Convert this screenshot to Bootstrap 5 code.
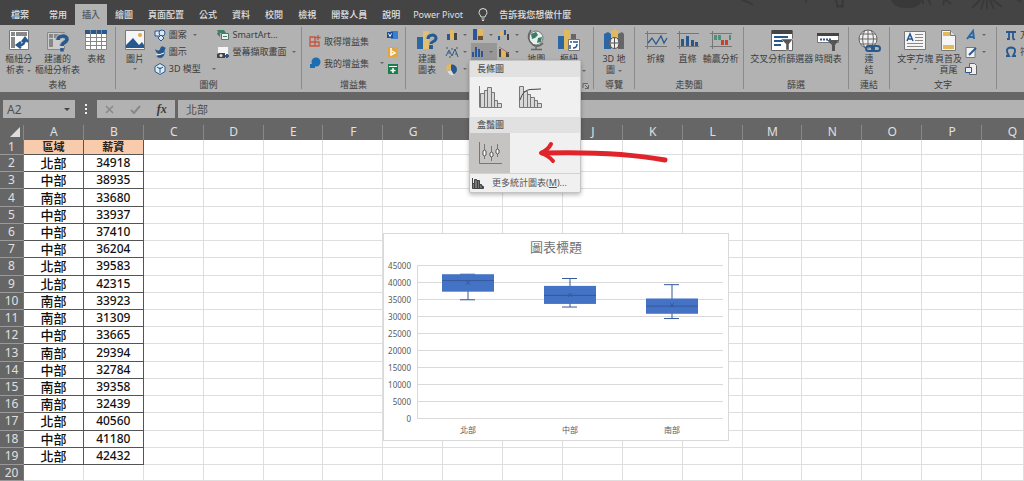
<!DOCTYPE html>
<html lang="zh-Hant">
<head>
<meta charset="utf-8">
<meta name="viewport" content="width=device-width, initial-scale=1">
<title>A2 - 北部</title>
<link href="https://cdn.jsdelivr.net/npm/bootstrap@5.3.0/dist/css/bootstrap.min.css" rel="stylesheet">
<script src="https://cdn.jsdelivr.net/npm/bootstrap@5.3.0/dist/js/bootstrap.bundle.min.js"></script>
<style>
  :root { --ink:#3c3c3c; --dark:#444; --mid:#666; --panel:#b2b2b2; }
  body { font-family:"Noto Sans","Noto Sans CJK TC",sans-serif; font-size:9px; line-height:11px; color:var(--ink); background:#fff; }
  button { font:inherit; color:inherit; background:none; border:0; padding:0; white-space:nowrap; }
  svg { display:block; flex:none; overflow:visible; }
  .tabs { background:var(--dark); height:25px; padding-left:4px; flex-wrap:nowrap; overflow:hidden; }
  .tab-row { height:25px; }
  .tabs .nav-link { color:#e0e0e0; padding:0 7px; line-height:16px; margin-right:1px; height:16px; white-space:nowrap; font-weight:500; }
  .tabs .nav-link.active { background:var(--panel); color:#505050; }
  .tabs .first { margin-right:6px; }
  .tabs .power { margin-left:-2px; margin-right:8px; font-weight:400; }
  .ribbon { background:var(--panel); display:grid; grid-template-columns:116fr 186fr 104fr 188fr 41fr 109fr 105fr 41fr 107fr 27fr; }
  .group { min-width:0; border-right:1px solid transparent; border-image:linear-gradient(transparent 3px,#8a8a8a 3px,#8a8a8a 63px,transparent 63px) 1; }
  .group:last-child { border:0; overflow:hidden; }
  .tools { display:grid; height:54px; }
  .tools > * { min-width:0; }
  .caption { height:13px; line-height:12px; text-align:center; position:relative; }
  .big { display:flex; flex-direction:column; align-items:center; padding-top:4px; justify-content:flex-start; }
  .big svg { width:22px; height:22px; margin-bottom:2px; }
  .stack { padding-top:1px; }
  .stack button { display:flex; align-items:center; height:17px; gap:3px; }
  .stack svg { width:12px; height:12px; }
  .stack.wide button { height:22px; }
  .stack.wide { padding-top:5px; }
  .stack.mini button { gap:5px; padding-left:1px; width:100%; }
  .stack.mini .on { background:#979797; }
  .dn { display:inline-block; border:2px solid transparent; border-top-color:#666; border-bottom:0; vertical-align:middle; margin-left:3px; }
  .mini .dn { margin-left:0; }
  .c-table { grid-template-columns:38fr 40fr 38fr; }
  .c-pic { grid-template-columns:38fr 64fr 84fr; }
  .c-add { grid-template-columns:79fr 18fr; padding-left:7px; }
  .c-chart { grid-template-columns:36fr 26fr 26fr 25fr 30fr 36fr 6fr; padding-left:3px; }
  .c-spark { grid-template-columns:42fr 22fr 45fr; }
  .c-filter { grid-template-columns:76fr 18fr 11fr; }
  .c-text { grid-template-columns:51fr 16fr 40fr; }
  .bar { background:var(--mid); padding:8px 0 0 3px; gap:3px; }
  .bar input { height:18px; border:0; background:var(--panel); color:#505050; min-width:0; padding:0 8px; border-radius:0; }
  .namebox { width:72px; position:relative; }
  .namebox input { font-size:12px; padding:0 4px; }
  .namebox .dn { position:absolute; right:5px; top:8px; border-width:3px 3px 0; border-top-color:#444; margin:0; }
  .entry input { font-size:11px; }
  .marks { width:78px; height:18px; background:var(--panel); }
  .marks .fx { font:italic 700 12px "Liberation Serif",serif; }
  .dots { width:16px; color:#eee; }
  .sheet { position:relative; overflow:hidden; }
  .cells { width:100%; height:100%; table-layout:fixed; border-collapse:separate; border-spacing:0; font-size:12px; line-height:14px; text-align:center; }
  .cells td, .cells th { padding:0; border-right:1px solid #dedede; border-bottom:1px solid #dedede; font-weight:400; }
  .cells .corner-col { width:24px; }
  .cells .last-col { width:42px; }
  .cells .first-row { height:15px; }
  .cells .last-row { height:16px; }
  .cells thead th { background:linear-gradient(#888,#888) right bottom/1px 15px no-repeat var(--mid); border:0; color:#e0e0e0; height:22px; padding-top:6px; }
  .cells thead th:last-child { background:var(--mid); text-align:right; padding-right:7px; }
  .cells tbody th { background:var(--mid); color:#e0e0e0; border-color:#999; border-right-color:#777; }
  .cells .data { color:#111; border-color:#555; font-weight:500; }
  .cells td.zone { font-size:13px; }
  .cells td.head { font-size:11px; font-weight:700; background:#f8cbad; color:#222; }
  .chart { position:absolute; left:383px; top:115px; background:#fff; border:1px solid #d9d9d9; }
  .chart text { fill:#595959; font-size:8px; }
  .chart .title { font-size:13px; fill:#737373; }
  .gallery.dropdown-menu { display:block; position:absolute; left:469px; top:60px; min-width:0; width:112px; padding:0; margin:0; border:1px solid #c4c4c4; border-radius:2px; background:#f0f0f0; box-shadow:0 2px 4px #0004; font-size:9px; color:#555; z-index:5; }
  .gallery .dropdown-header { font-size:9px; line-height:16px; padding:0 0 0 7px; background:#e1e1e1; color:#555; }
  .gallery .choice { width:40px; height:40px; display:flex; align-items:center; justify-content:center; }
  .gallery .choice.active { background:#c6c4c3; }
  .gallery .dropdown-item { font-size:9px; line-height:18px; padding:0 0 0 2px; color:#555; gap:8px; border-top:1px solid #d2d2d2; }
  .stroke { position:absolute; left:536px; top:140px; z-index:6; pointer-events:none; }
</style>
</head>
<body class="vh-100 d-flex flex-column overflow-hidden position-relative">

<header>
  <nav class="nav tabs align-items-end" aria-label="功能區索引標籤">
    <div class="tab-row d-flex align-items-center pt-1 flex-nowrap w-100">
      <a class="nav-link first" href="#">檔案</a>
      <a class="nav-link" href="#">常用</a>
      <a class="nav-link active h-100 d-flex align-items-center" href="#">插入</a>
      <a class="nav-link" href="#">繪圖</a>
      <a class="nav-link" href="#">頁面配置</a>
      <a class="nav-link" href="#">公式</a>
      <a class="nav-link" href="#">資料</a>
      <a class="nav-link" href="#">校閱</a>
      <a class="nav-link" href="#">檢視</a>
      <a class="nav-link" href="#">開發人員</a>
      <a class="nav-link" href="#">說明</a>
      <a class="nav-link power" href="#">Power Pivot</a>
      <svg width="10" height="13" viewBox="0 0 10 13" fill="none" stroke="#ddd"><path d="M3 9C3 7.500 1 6.500 1 4.500a4 4 0 0 1 8 0C9 6.500 7 7.500 7 9zM3.500 11h3M4 12.500h2"/></svg>
      <a class="nav-link ms-1" href="#">告訴我您想做什麼</a>
      <svg class="ms-auto align-self-start" width="284" height="20" viewBox="0 4 284 20" fill="none" stroke="#393939" stroke-width="2"><path d="M2 0l6 2 5 3M66 0v3M96 0l2 8m5-8l-1 8m-6-2h8"/><path d="M152 0q3 8 17 7 10 0 12-7z" fill="#393939"/><path d="M155 0l4-4m-3 6l5-5m0 6l3-4m4 4v-5m7 4l-3-4m15-1l4 8m-8-8v7m20-6l8 6m-6-7l-2 8m5-6h7M240 0l-8 8m12-8l-3 9m6-9v9m3-9l4 9m-1-9l9 7m15-8l4 3"/></svg>
    </div>
  </nav>

  <div class="ribbon">
    <section class="group">
      <div class="tools c-table">
        <button class="big"><svg viewBox="0 0 22 22"><path fill="#fff" stroke="#777" d="M1.500 1.500h19v19h-19z"/><path fill="#888" d="M3 3h4v4H3zm5 0h11v4H8zM3 8h4v11H3z"/><path fill="none" stroke="#28598e" stroke-width="2.500" d="M10 16c5 1 7-2 7-6m-3 3l3-4 3 4m-7 0l-4 3 4 3"/></svg>樞紐分<span>析表<i class="dn"></i></span></button>
        <button class="big"><svg viewBox="0 0 22 22"><path fill="#ccc" stroke="#888" d="M1.500 3.500h17v17h-17z"/><path fill="#888" d="M3 5h4v4H3zm5 0h9v4H8zM3 10h4v8H3z"/><path fill="none" stroke="#b2b2b2" stroke-width="6" d="M12 11c0-5 9-5 9-1 0 4-5 3-5 7"/><path fill="none" stroke="#28598e" stroke-width="3.500" d="M12 11c0-5 9-5 9-1 0 4-5 3-5 7m0 2v3.500"/></svg>建議的<span>樞紐分析表</span></button>
        <button class="big"><svg viewBox="0 0 22 22"><path fill="#fff" stroke="#888" d="M.5 1.500h21v19H.5z"/><path fill="#28598e" d="M0 1h22v4H0z"/><path stroke="#888" d="M1 8.500h20M1 12.500h20M1 16.500h20M5.500 1v19M11.500 1v19M16.500 1v19"/></svg>表格</button>
      </div>
      <div class="caption">表格</div>
    </section>

    <section class="group">
      <div class="tools c-pic">
        <button class="big"><svg viewBox="0 0 22 22"><path fill="#f5f5f5" stroke="#777" d="M1.500 1.500h19v19h-19z"/><path fill="#28598e" d="M2 19v-3l7-7 6 7 3-3 2 3v3z"/><circle cx="16" cy="6" r="2" fill="#e6a84c"/></svg>圖片<i class="dn mt-1 ms-0"></i></button>
        <div class="stack">
          <button><svg viewBox="0 0 12 12" fill="#dce8f0" stroke="#28598e"><path d="M1 2h6v5H1z"/><circle cx="8" cy="4" r="3"/><path d="M7 6l3 3-3 3-3-3z"/></svg>圖案<i class="dn"></i></button>
          <button><svg viewBox="0 0 12 12"><path fill="#28598e" d="M1 3q4 3 5 0 1-4 4-2l2 1-1 1q0 5-5 5-4 0-5-5z"/><path fill="#28598e" d="M2 9q5 0 9-3-1 6-5 6-3 0-4-3z"/><path stroke="#fff" fill="none" d="M2 9q4 0 8-2"/></svg>圖示</button>
          <button><svg viewBox="0 0 12 12" fill="#dcecf0" stroke="#28598e"><path d="M6 .5l5 3v5l-5 3-5-3v-5zM3 4l3 2 3-2M6 6v4"/></svg>3D 模型<i class="dn ms-2"></i></button>
        </div>
        <div class="stack">
          <button><svg viewBox="0 0 12 12"><path fill="#3f7f62" d="M0 1h7l2 3H3v4L0 5l1-2z"/><path fill="#eee" stroke="#4d7766" d="M4.500 4.500h7v6h-7z"/><path stroke="#4d7766" d="M6 7.500h4"/></svg>SmartArt...</button>
          <button><svg viewBox="0 0 12 12"><path fill="#f5f5f5" d="M1 1h10v8H1z"/><path fill="#444" d="M2 7h6v5H0V8z"/><circle cx="4" cy="9.500" r="1.500" fill="#ddd"/><path stroke="#28598e" stroke-width="2" d="M8 10h4m-2-2v4"/></svg>螢幕擷取畫面<i class="dn"></i></button>
        </div>
      </div>
      <div class="caption">圖例</div>
    </section>

    <section class="group">
      <div class="tools c-add">
        <div class="stack wide">
          <button><svg viewBox="0 0 12 12" fill="none" stroke="#c8553d" stroke-width="1.300"><path d="M1 2h5v9H1zm0 5h9v4H6V2M9 0v5M6.500 2.500h5"/></svg>取得增益集</button>
          <button><svg viewBox="0 0 12 12"><circle cx="7" cy="5" r="4.500" fill="#1d6db5"/><path fill="#1d6db5" d="M1 7h5v4H1z"/></svg>我的增益集<i class="dn ms-2"></i></button>
        </div>
        <div class="stack">
          <button aria-label="Visio"><svg viewBox="0 0 12 12"><path fill="#3a80ce" d="M4 2h7v8H4z"/><path fill="#1b4f99" d="M0 3h6v6H0z"/><path stroke="#fff" fill="none" d="M1.500 4.500l1.500 3 1.500-3"/></svg></button>
          <button aria-label="Bing"><svg viewBox="0 0 12 12"><path fill="#e3a53c" d="M1 1h10v10H1z"/><path fill="none" stroke="#fff" stroke-width="1.500" d="M4 2v7l4-2-3-2"/></svg></button>
          <button aria-label="People Graph"><svg viewBox="0 0 12 12"><path fill="#16804a" d="M1 1h10v10H1z"/><path stroke="#fff" d="M2 3.500h8"/><path stroke="#fff" stroke-width="1.500" d="M3.500 7.500h5M6 5v5"/></svg></button>
        </div>
      </div>
      <div class="caption">增益集</div>
    </section>

    <section class="group">
      <div class="tools c-chart">
        <button class="big"><svg viewBox="0 0 22 22"><path fill="#2b66a5" d="M1 8h6v12H1z"/><path fill="#e3c06f" d="M7 2h6v18H7z"/><path fill="#2b66a5" d="M13 13h4v7h-4z"/><path fill="none" stroke="#b2b2b2" stroke-width="5" d="M12 10c0-5 8-5 8-1 0 4-5 3-5 7"/><path fill="none" stroke="#28598e" stroke-width="3" d="M12 10c0-5 8-5 8-1 0 4-5 3-5 6m0 2v3"/></svg>建議<span>圖表</span></button>
        <div class="stack mini">
          <button aria-label="直條圖"><svg viewBox="0 0 12 12"><path fill="#2b579a" d="M1 5h3v6H1z"/><path fill="#e3b95f" d="M4 1h4v10H4z"/><path fill="#444" d="M8 4h3v7H8z"/></svg><i class="dn"></i></button>
          <button aria-label="散佈圖"><svg viewBox="0 0 12 12" fill="none" stroke="#555"><path d="M0 10l3-6 3 6 3-7 3 8" stroke="#28598e"/><path d="M0 2h2m0 5h2m1-4h2m2 5h2m-1-6h2m-9 9h2"/></svg><i class="dn"></i></button>
          <button aria-label="圓形圖"><svg viewBox="0 0 12 12"><circle cx="6" cy="6.500" r="5" fill="#28598e"/><path fill="#e3b95f" d="M5 7V1Q0 1 0 6l1 2z"/><path fill="#ddd" d="M5 7l3 5Q3 13 1 8z"/></svg><i class="dn"></i></button>
        </div>
        <div class="stack mini">
          <button aria-label="階層圖"><svg viewBox="0 0 12 12"><path fill="#2b579a" d="M1 0h4v11H1z"/><path fill="#e3b95f" d="M6 0h5v6H6z"/><path fill="#71502d" d="M6 7h5v4H6z"/></svg><i class="dn"></i></button>
          <button class="on" aria-label="統計圖表"><svg viewBox="0 0 12 12"><path fill="#2b579a" d="M0 6h2v5H0zm3-5h2v10H3zm3 2h2v8H6zm3 2h2v6H9z"/></svg><i class="dn"></i></button>
        </div>
        <div class="stack mini">
          <button aria-label="瀑布圖"><svg viewBox="0 0 12 12"><path fill="#2b579a" d="M0 7h2v4H0zm6-6h2v5H6z"/><path fill="#e3b95f" d="M2 2h3v5H2z"/><path fill="#444" d="M9 5h2v6H9z"/></svg><i class="dn"></i></button>
          <button aria-label="組合圖"><svg viewBox="0 0 12 12"><path fill="#444" d="M1 3h2v8H1z"/><path fill="#e3b95f" d="M4 5h3v6H4z"/><path fill="#444" d="M8 6h3v5H8z"/><path fill="none" stroke="#c06a4b" d="M1 1l5 3 5 4"/></svg><i class="dn"></i></button>
        </div>
        <button class="big"><svg viewBox="0 0 22 22"><circle cx="11" cy="9" r="7" fill="#e6efec" stroke="#6b7773"/><path fill="#3e7b67" d="M6 5l5-2 2 3-3 3-3 1zm7 4l4-1-1 5-4 1z"/><path fill="none" stroke="#666" stroke-width="1.500" d="M6 1q-6 8 2 15 6 3 10-2M11 17v3M6 20.500h11"/></svg>地圖</button>
        <button class="big"><svg viewBox="0 0 22 22"><path fill="#2b66a5" d="M0 7h6v13H0z"/><path fill="#e3b95f" d="M6 1h6v19H6z"/><path fill="#666" d="M13 5h5v6h-5z"/><path fill="#fff" stroke="#777" d="M10.500 10.500h11v11h-11z"/><path fill="none" stroke="#28598e" stroke-width="1.500" d="M12 13h2m1 0h5m-8 3v4m3-1q4 0 4-4"/></svg>樞紐<span>分析圖<i class="dn"></i></span></button>
      </div>
      <div class="caption"><svg class="position-absolute end-0 top-0 mt-1 me-1" width="6" height="6" fill="none" stroke="#666"><path d="M0 5V.5h5M2 2l3 3M5.500 2v3.500H2"/></svg></div>
    </section>

    <section class="group">
      <div class="tools">
        <button class="big"><svg viewBox="0 0 22 22"><path fill="#2b66a5" d="M1 5l4-2 3 2v15H1z"/><path fill="#e3b95f" d="M8 2l4-2 3 2v12H8z"/><path fill="#666" d="M15 5l4-2 2 2v15h-6z"/><g fill="#eee" stroke="#555"><circle cx="11.500" cy="14" r="5.500"/><path fill="none" d="M6 14h11M11.500 8.500v11M8 9.500q-2 5 0 9m7-9q2 5 0 9"/></g></svg>3D 地<span>圖<i class="dn"></i></span></button>
      </div>
      <div class="caption">導覽</div>
    </section>

    <section class="group">
      <div class="tools c-spark">
        <button class="big"><svg viewBox="0 0 22 22" fill="none" stroke="#777"><path d="M2.500 2v18M0 4.500h22M0 17.500h22"/><path stroke="#28598e" stroke-width="1.300" d="M3 14l4-5 4 6 5-8 3 7 3-5"/></svg>折線</button>
        <button class="big"><svg viewBox="0 0 22 22"><path fill="none" stroke="#777" d="M2.500 2v18M0 4.500h22M0 17.500h22"/><path fill="#28598e" d="M4 10h3v7H4zm5-3h3v10H9zm5 4h3v6h-3zm4 2h3v4h-3z"/></svg>直條</button>
        <button class="big"><svg viewBox="0 0 22 22"><path fill="none" stroke="#777" d="M2.500 2v18M0 4.500h22M0 17.500h22"/><path fill="#4e9177" d="M4 6h3v5H4zm4 0h3v5H8zm11 0h2v5h-2z"/><path fill="#c8432f" d="M11 11h3v5h-3zm4 0h3v5h-3z"/></svg>輸贏分析</button>
      </div>
      <div class="caption">走勢圖</div>
    </section>

    <section class="group">
      <div class="tools c-filter">
        <button class="big"><svg viewBox="0 0 22 22"><path fill="#fff" stroke="#666" d="M.5 1.500h21v20H.5z"/><path fill="#444" d="M1 1h20v4H1z"/><path stroke="#28598e" stroke-width="2" d="M3 8h14M3 12h9M3 16h7"/><path fill="#555" stroke="#eee" stroke-width=".5" d="M10 10h12l-4 5v6h-3v-6z"/></svg>交叉分析篩選器</button>
        <button class="big"><svg viewBox="0 0 22 22"><path fill="#fff" stroke="#777" d="M.5 4.500h21v9H.5z"/><path fill="#444" d="M0 4h22v3H0z"/><path stroke="#28598e" stroke-width="2" stroke-dasharray="2 1" d="M3 10.500h11"/><path fill="#555" d="M10 11h12l-4 5v6h-3v-6z"/></svg>時間表</button>
      </div>
      <div class="caption">篩選</div>
    </section>

    <section class="group">
      <div class="tools">
        <button class="big"><svg viewBox="0 0 22 22" fill="none"><g stroke="#666"><circle cx="10" cy="10" r="9" fill="#f0f0f0"/><path d="M1 10h18M10 1v18M3 5h14M3 15h14M7 1q-5 9 0 18m6-18q5 9 0 18"/></g><g stroke="#28598e" stroke-width="2"><rect x="8" y="17" width="8" height="5" rx="2.500"/><rect x="14" y="17" width="8" height="5" rx="2.500"/></g></svg>連<span>結</span></button>
      </div>
      <div class="caption">連結</div>
    </section>

    <section class="group">
      <div class="tools c-text">
        <button class="big"><svg viewBox="0 0 22 22"><path fill="#f5f5f5" stroke="#777" d="M.5 2.500h21v18H.5z"/><path fill="none" stroke="#28598e" stroke-width="1.500" d="M3 12l3-7 3 7M4 10h4"/><path stroke="#888" d="M11 5.500h8M11 8.500h8M11 11.500h8M3 14.500h16M3 17.500h16"/></svg>文字方塊<i class="dn mt-1 ms-0"></i></button>
        <button class="big"><svg viewBox="0 0 22 22"><path fill="#f5f5f5" stroke="#777" d="M4.500 1.500h9l5 5v15h-14z"/><path fill="#e3b95f" d="M6 3h7v4H6zm0 13h11v4H6z"/><path fill="#ddd" stroke="#777" d="M13.500 1.500v5h5"/></svg>頁首及<span>頁尾</span></button>
        <div class="stack mini ps-2">
          <button aria-label="文字藝術師"><svg viewBox="0 0 12 12" fill="none" stroke="#2b66a5" stroke-width="2"><path d="M2 10l6-8 1 8M4 8h5"/></svg><i class="dn"></i></button>
          <button aria-label="簽名欄"><svg viewBox="0 0 12 12"><path fill="#f2f2f2" stroke="#777" d="M1 1.500h9v10H1z"/><path stroke="#28598e" stroke-width="2" d="M4 9l7-7"/></svg><i class="dn"></i></button>
          <button aria-label="物件"><svg viewBox="0 0 12 12" fill="#eee" stroke="#666"><path d="M4.500.5h5l2 2v9h-7z"/><path stroke="#28598e" d="M.5 4.500h6v5h-6z"/></svg></button>
        </div>
      </div>
      <div class="caption">文字</div>
    </section>

    <section class="group">
      <div class="tools">
        <div class="stack ps-2">
          <button><svg viewBox="0 0 12 12" fill="none" stroke="#28598e" stroke-width="1.800"><path d="M1 3h10M4 3v7H2m6-7v6q0 2 2 1"/></svg>方程式</button>
          <button><svg viewBox="0 0 12 12" fill="none" stroke="#28598e" stroke-width="1.800"><path d="M1 10h3Q-1 2 6 1.500 13 2 8 10h3"/></svg>符號</button>
        </div>
      </div>
    </section>
  </div>

  <div class="bar d-flex">
    <div class="namebox"><input class="w-100 d-block" type="text" value="A2" aria-label="名稱方塊"><i class="dn"></i></div>
    <div class="dots d-flex justify-content-center align-items-center"><svg width="2" height="10" fill="currentColor"><path d="M0 0h2v2H0zm0 4h2v2H0zm0 4h2v2H0z"/></svg></div>
    <div class="marks d-flex align-items-center justify-content-around">
      <button aria-label="取消"><svg width="9" height="9" stroke="#888" stroke-width="1.500"><path d="M1 1l7 7M8 1L1 8"/></svg></button>
      <button aria-label="輸入"><svg width="10" height="9" fill="none" stroke="#888" stroke-width="2"><path d="M1 5l3 3 6-7"/></svg></button>
      <button class="fx">fx</button>
    </div>
    <div class="entry flex-grow-1"><input class="w-100 d-block" type="text" value="北部" aria-label="資料編輯列"></div>
  </div>
</header>

<div class="gallery dropdown-menu show">
  <h6 class="dropdown-header">長條圖</h6>
  <div class="d-flex">
    <button class="choice" aria-label="長條圖"><svg width="24" height="24" fill="#d8d8d8" stroke="#777"><path fill="none" d="M1.500 1v21.500"/><path d="M2.500 8.500h4v14h-4zm4-3h3v17h-3zm3-3h4v20h-4zm4 5h3v15h-3zm3 8h3v7h-3zm3 3h4v4h-4z"/></svg></button>
    <button class="choice" aria-label="柏拉圖"><svg width="24" height="24" fill="#d8d8d8" stroke="#777"><path d="M1.500 1.500h4v21h-4zm4 5h4v16h-4zm4 3h3v13h-3zm3 3h4v10h-4zm4 3h3v7h-3zm3 3h4v4h-4z"/><path fill="none" stroke="#444" d="M2 15Q5 5 12 4.500L23 4"/></svg></button>
  </div>
  <h6 class="dropdown-header">盒鬚圖</h6>
  <div class="d-flex">
    <button class="choice active" aria-label="盒鬚圖"><svg width="24" height="24" fill="#fff" stroke="#777"><path fill="none" d="M1.500 1v21.500H24M6.500 3v15M13.500 5v15M19.500 3v13"/><path stroke="#555" d="M6.500 9l1.500 1v4l-1.500 1L5 14v-4zM13.500 11l1.500 1v3l-1.500 1-1.500-1v-3zM19.500 8l1.500 1v3l-1.500 1-1.500-1V9z"/></svg></button>
  </div>
  <a class="dropdown-item d-flex align-items-center" href="#"><svg width="12" height="11" fill="#777" stroke="#444"><path d="M.5 0v10.500h11v-2h-2v-2h-2v-4h-3v-1h-2v4h-2m2 0v5m3-8v8m2-6v6m3-3v3"/></svg><span>更多統計圖表(<u>M</u>)...</span></a>
</div>

<svg class="stroke" width="134" height="26" fill="none" stroke="#e0242b" stroke-width="5" stroke-linecap="round" stroke-linejoin="round" aria-hidden="true"><path d="M129 20Q80 11 6 13"/><path stroke-width="4" d="M15 4Q12 10 5 13q8 3 12 8"/></svg>

<main class="sheet flex-grow-1">
  <table class="cells" id="cells"></table>
  <svg class="chart" id="chart" width="346" height="208" role="img" aria-label="圖表標題"></svg>
</main>

<script>
  const rows = [['北部',34918],['中部',38935],['南部',33680],['中部',33937],['中部',37410],['中部',36204],['北部',39583],['北部',42315],['南部',33923],['南部',31309],['中部',33665],['南部',29394],['中部',32784],['南部',39358],['南部',32439],['北部',40560],['中部',41180],['北部',42432]];
  const letters = [...'ABCDEFGHIJKLMNOPQ'];
  const blanks = '<td></td>'.repeat(15);
  const corner = '<svg class="ms-auto me-1" width="10" height="10"><path d="M10 0v10H0z" fill="#ddd"/></svg>';
  document.getElementById('cells').innerHTML =
    '<colgroup><col class="corner-col">' + '<col>'.repeat(16) + '<col class="last-col"></colgroup>' +
    '<thead><tr><th>' + corner + '</th>' + letters.map(l => `<th>${l}</th>`).join('') + '</tr></thead><tbody>' +
    '<tr class="first-row"><th>1</th><td class="data head">區域</td><td class="data head">薪資</td>' + blanks + '</tr>' +
    rows.map((r, i) => `<tr><th>${i + 2}</th><td class="data zone">${r[0]}</td><td class="data">${r[1]}</td>${blanks}</tr>`).join('') +
    '<tr class="last-row"><th>20</th><td></td><td></td>' + blanks + '</tr></tbody>';

  // Box plot: whiskers, quartiles, median and mean for each region
  const y = v => 184.5 - v * 0.0034;
  const boxes = [
    { name:'北部', x:84,  lo:34918, q1:37300, med:40560, mean:39962, q3:42432, hi:42432 },
    { name:'中部', x:186, lo:32784, q1:33700, med:36204, mean:36302, q3:39000, hi:41180 },
    { name:'南部', x:288, lo:29394, q1:30800, med:33060, mean:33351, q3:35300, hi:39358 }
  ];
  let s = '<text class="title" x="172" y="18" text-anchor="middle">圖表標題</text>';
  for (let v = 0; v <= 45000; v += 5000)
    s += `<path d="M33 ${y(v)}H339" stroke="#d9d9d9"/><text x="27" y="${y(v) + 3}" text-anchor="end">${v}</text>`;
  s += '<path d="M33.500 31V185" stroke="#d9d9d9"/>';
  for (const b of boxes) {
    s += `<path fill="none" stroke="#34599c" d="M${b.x} ${y(b.hi)}V${y(b.lo)}M${b.x - 8} ${y(b.hi)}h15M${b.x - 8} ${y(b.lo)}h15"/>` +
      `<rect x="${b.x - 26}" y="${y(b.q3)}" width="52" height="${y(b.q1) - y(b.q3)}" fill="#4472c4"/>` +
      `<path fill="none" stroke="#34599c" d="M${b.x - 26} ${y(b.med)}h52M${b.x - 2} ${y(b.mean) - 2}l4 4m0-4l-4 4"/>` +
      `<text x="${b.x}" y="199" text-anchor="middle">${b.name}</text>`;
  }
  document.getElementById('chart').innerHTML = s;
</script>
</body>
</html>
